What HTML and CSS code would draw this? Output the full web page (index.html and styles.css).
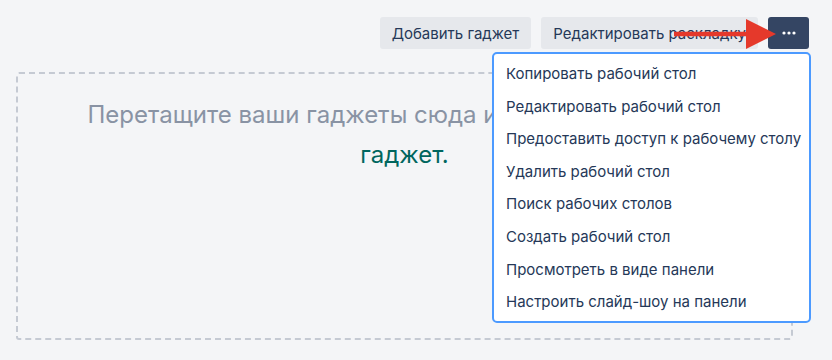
FILE: index.html
```html
<!DOCTYPE html>
<html lang="ru">
<head>
    <meta charset="UTF-8">
    <title>Рабочий стол</title>
    <link rel="stylesheet" href="styles.css">
</head>
<body>
    <div class="toolbar">
        <button type="button" class="btn">Добавить гаджет</button>
        <button type="button" class="btn">Редактировать раскладку</button>
        <div class="more-wrap">
            <button type="button" class="btn btn-more" aria-label="Ещё">
                <svg width="14" height="4" viewBox="0 0 14 4">
                    <circle cx="2" cy="2" r="1.6" fill="#fff"/>
                    <circle cx="7" cy="2" r="1.6" fill="#fff"/>
                    <circle cx="12" cy="2" r="1.6" fill="#fff"/>
                </svg>
            </button>
            <ul class="menu">
                <li>Копировать рабочий стол</li>
                <li>Редактировать рабочий стол</li>
                <li>Предоставить доступ к рабочему столу</li>
                <li>Удалить рабочий стол</li>
                <li>Поиск рабочих столов</li>
                <li>Создать рабочий стол</li>
                <li>Просмотреть в виде панели</li>
                <li>Настроить слайд-шоу на панели</li>
            </ul>
        </div>
        <!-- annotation arrow -->
        <svg class="arrow" width="104" height="32" viewBox="0 0 104 32">
            <path d="M0 15 H74" stroke="#e5392b" stroke-width="4.5"/>
            <path d="M72 0 L102 15 L72 30 Z" fill="#e5392b"/>
        </svg>
    </div>
    <div class="dropzone">
        <p>Перетащите ваши гаджеты сюда или <a href="#">добавьте новый гаджет.</a></p>
    </div>
</body>
</html>
```

FILE: styles.css
```css
body {
    margin: 0;
    background: #f4f5f7;
    font-family: Inter, 'Noto Sans', sans-serif;
    color: #253858;
}
.toolbar {
    position: relative;
    display: flex;
    justify-content: flex-end;
    gap: 10px;
    padding: 17px 23px 0 0;
}
.btn {
    height: 32px;
    padding: 0 12px;
    border: none;
    border-radius: 3px;
    background: #e6e8ec;
    color: #253858;
    font-family: inherit;
    font-size: 15px;
    cursor: pointer;
}
.btn-more {
    width: 41px;
    padding: 0;
    background: #344563;
    display: flex;
    align-items: center;
    justify-content: center;
}
.more-wrap {
    position: relative;
}
.menu {
    position: absolute;
    top: 35px;
    right: -2px;
    width: 315px;
    margin: 0;
    padding: 4px 0 2px 0;
    list-style: none;
    background: #fff;
    border: 2px solid #4c9aff;
    border-radius: 5px;
    z-index: 2;
}
.menu li {
    padding: 6px 12px;
    line-height: 20.6px;
    font-size: 15px;
    color: #253858;
    white-space: nowrap;
}
.arrow {
    position: absolute;
    top: 19px;
    left: 674px;
    z-index: 3;
}
.dropzone {
    height: 264px;
    margin: 23px 39px 0 16px;
    border: 2px dashed #c5cad3;
    border-radius: 3px;
}
.dropzone p {
    margin: 0;
    padding: 21px 40px 0 40px;
    text-align: center;
    font-size: 24px;
    line-height: 40px;
    color: #8993a4;
}
.dropzone a {
    color: #00665e;
    text-decoration: none;
}
```
